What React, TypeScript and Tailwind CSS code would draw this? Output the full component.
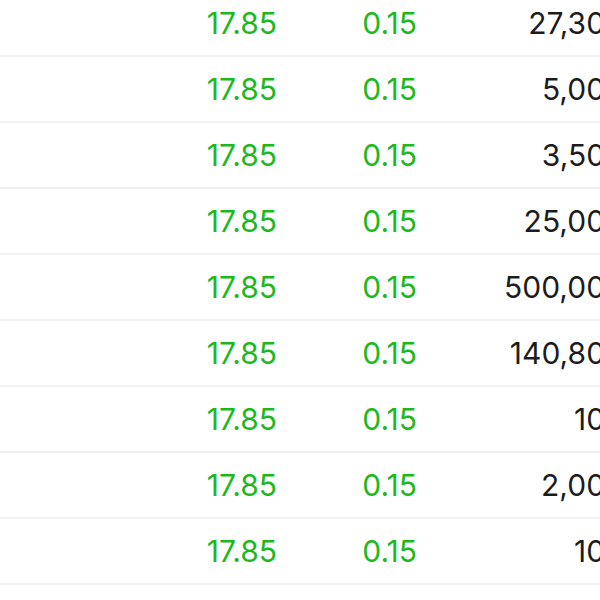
const rows = ["27,300", "5,000", "3,500", "25,000", "500,000", "140,800", "100", "2,000", "100"];

export default function App() {
  return (
    <div className="w-[600px] h-[600px] overflow-hidden bg-white" style={{ fontFamily: "Inter, 'Liberation Sans', sans-serif" }}>
      <div className="-mt-[9px]">
        {rows.map((amount, i) => (
          <div key={i} className="flex h-[66px] items-center border-b-2 border-[#f1f1f1] text-[30px] whitespace-nowrap">
            <div className="w-[277px] shrink-0 text-right text-[#1cb91c]">17.85</div>
            <div className="w-[140px] shrink-0 text-right text-[#1cb91c]">0.15</div>
            <div className="w-[207px] shrink-0 text-right text-[#1c1c1c]">{amount}</div>
          </div>
        ))}
      </div>
    </div>
  );
}
